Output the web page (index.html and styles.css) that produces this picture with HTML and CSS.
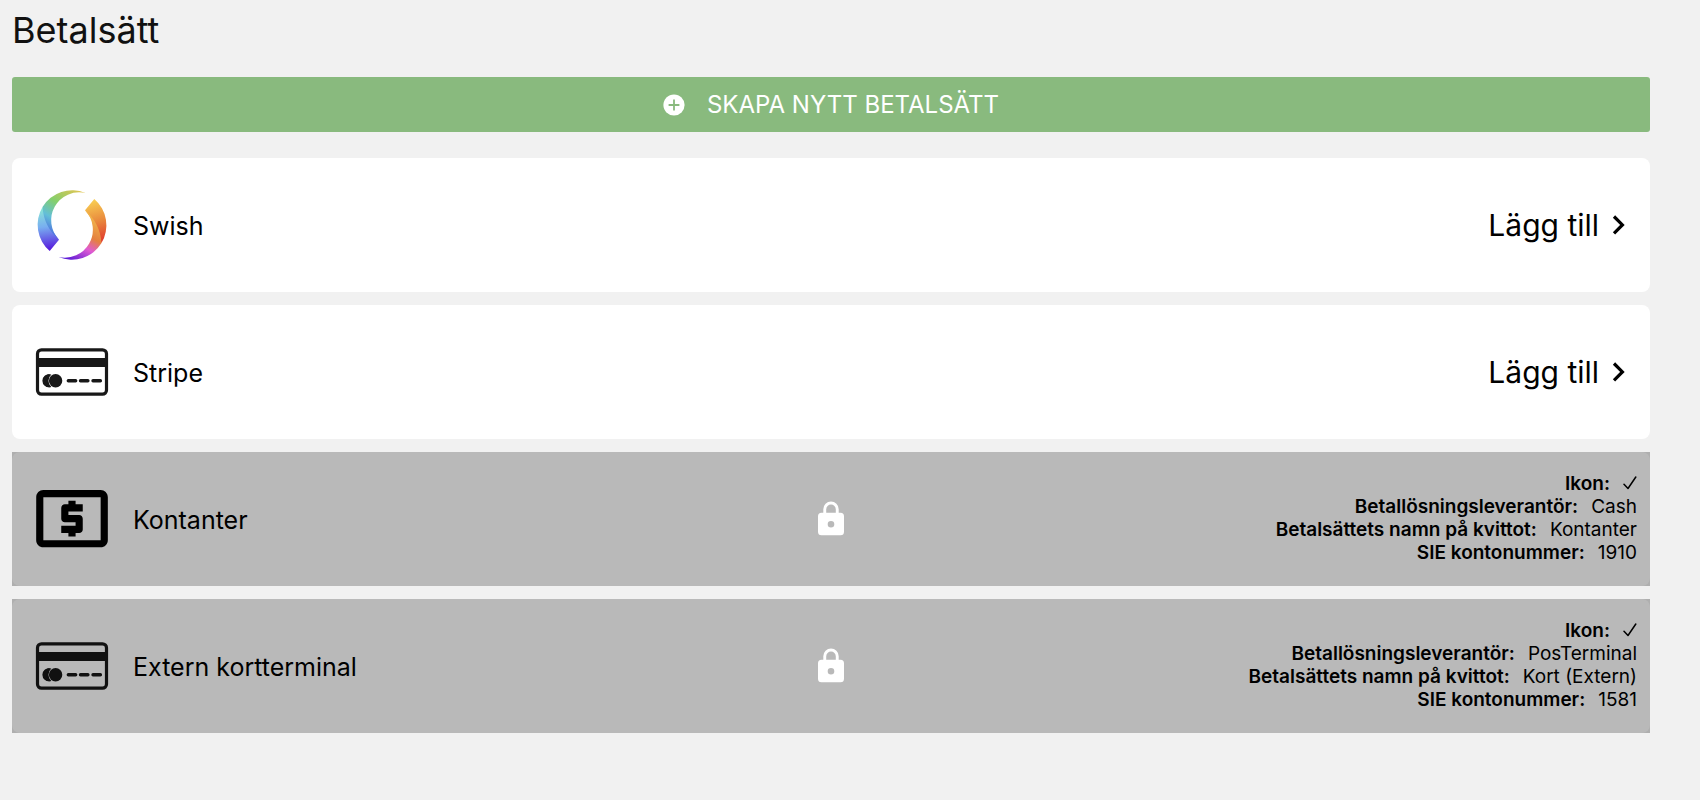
FILE: index.html
```html
<!DOCTYPE html>
<html lang="sv">
  <head>
    <meta charset="UTF-8" />
    <meta name="viewport" content="width=device-width, initial-scale=1.0" />
    <title>Betalsätt</title>
    <link rel="stylesheet" href="styles.css">
  </head>
  <body>
    <!-- icons that are used by more than one row -->
    <svg class="sprite" aria-hidden="true">
      <symbol id="icon-card" viewBox="0 0 96 96">
        <rect x="13.5" y="25.8" width="69" height="44.4" rx="4" fill="none" stroke="#181818" stroke-width="3.2" />
        <rect x="13" y="34" width="70" height="9" fill="#181818" />
        <path d="M26 50.4a6.5 6.5 0 1 0 0 12.8a8.6 8.6 0 0 1 0-12.8z" fill="#181818" />
        <path d="M27.4 50.6A6.5 6.5 0 1 0 27.4 63A8 8 0 0 1 27.4 50.6z" fill="#181818" />
        <circle cx="31.6" cy="56.8" r="6.7" fill="#181818" />
        <path d="M44.3 56.8h7.4M56.5 56.8h7.4M69 56.8h7.4" stroke="#181818" stroke-width="3.4" stroke-linecap="round" />
      </symbol>
      <symbol id="icon-chevron" viewBox="0 0 24 24">
        <path d="M7 3.5l8.4 8.4l-8.4 8.4" fill="none" stroke="currentColor" stroke-width="3.2" />
      </symbol>
      <symbol id="icon-lock" viewBox="0 0 40 40">
        <path fill-rule="evenodd" d="M29.5 13.8h-1.8v-3.6a7.7 7.7 0 0 0-15.4 0v3.6h-1.8a3.5 3.5 0 0 0-3.5 3.5v15.5a3.5 3.5 0 0 0 3.5 3.5h19a3.5 3.5 0 0 0 3.5-3.5V17.3a3.5 3.5 0 0 0-3.5-3.5zM20 28.5a3.3 3.3 0 1 1 0-6.6a3.3 3.3 0 0 1 0 6.6zM24.8 13.8h-9.6v-3.4a4.8 4.8 0 0 1 9.6 0z" fill="#fff" />
      </symbol>
      <symbol id="icon-check" viewBox="0 0 14 14">
        <path d="M1 8.2l4 4.3L12.8 1" fill="none" stroke="currentColor" stroke-width="1.5" stroke-linecap="round" stroke-linejoin="round" />
      </symbol>
    </svg>

    <main class="page">
      <h1 class="title">Betalsätt</h1>

      <button class="create-button" type="button">
        <svg class="create-icon" viewBox="0 0 22 22" aria-hidden="true">
          <circle cx="11" cy="11" r="10.6" fill="#fff" />
          <path d="M11 5.6v10.8M5.6 11h10.8" stroke="#89ba7e" stroke-width="1.8" />
        </svg>
        <span>SKAPA NYTT BETALSÄTT</span>
      </button>

      <ul class="methods">
        <li class="method">
          <svg class="method-icon" viewBox="0 0 96 96" aria-hidden="true">
            <defs>
              <linearGradient id="leftOuter" gradientUnits="userSpaceOnUse" x1="20" y1="26" x2="27" y2="73">
                <stop offset="0" stop-color="#8ff5cf" />
                <stop offset="0.5" stop-color="#78aef0" />
                <stop offset="1" stop-color="#5516dc" />
              </linearGradient>
              <linearGradient id="leftInner" gradientUnits="userSpaceOnUse" x1="60" y1="15" x2="30" y2="62">
                <stop offset="0" stop-color="#e3c552" />
                <stop offset="0.42" stop-color="#83cf6c" />
                <stop offset="0.7" stop-color="#63bfd8" />
                <stop offset="1" stop-color="#4a62e0" />
              </linearGradient>
              <linearGradient id="rightOuter" gradientUnits="userSpaceOnUse" x1="68" y1="24" x2="80" y2="66">
                <stop offset="0" stop-color="#f8cc52" />
                <stop offset="0.5" stop-color="#e8863c" />
                <stop offset="1" stop-color="#e0302c" />
              </linearGradient>
              <linearGradient id="rightInner" gradientUnits="userSpaceOnUse" x1="64" y1="34" x2="38" y2="82">
                <stop offset="0" stop-color="#f2be4c" />
                <stop offset="0.4" stop-color="#e5803f" />
                <stop offset="0.62" stop-color="#e05bd2" />
                <stop offset="1" stop-color="#4a12d8" />
              </linearGradient>
            </defs>
            <path d="M25.7 74A34.6 34.6 0 0 1 18.5 30Q24 50 35 62.7z" fill="url(#leftOuter)" />
            <path d="M61.5 16A34.6 34.6 0 0 0 18.5 30Q20 50 35 62.7A28 28 0 0 1 61.5 16z" fill="url(#leftInner)" />
            <path d="M70.3 22A34.6 34.6 0 0 1 77.5 66Q72 46 61 33.3z" fill="url(#rightOuter)" />
            <path d="M34.5 80A34.6 34.6 0 0 0 77.5 66Q76 46 61 33.3A28 28 0 0 1 34.5 80z" fill="url(#rightInner)" />
          </svg>
          <span class="method-name">Swish</span>
          <button class="add-button" type="button">
            Lägg till
            <svg class="chevron" aria-hidden="true"><use href="#icon-chevron" /></svg>
          </button>
        </li>

        <li class="method">
          <svg class="method-icon" aria-hidden="true"><use href="#icon-card" /></svg>
          <span class="method-name">Stripe</span>
          <button class="add-button" type="button">
            Lägg till
            <svg class="chevron" aria-hidden="true"><use href="#icon-chevron" /></svg>
          </button>
        </li>

        <li class="method">
          <svg class="method-icon" viewBox="-1.4 -1.3 26.8 26.8" aria-hidden="true">
            <path d="M11 17h2v-1h1c.55 0 1-.45 1-1v-3c0-.55-.45-1-1-1h-3v-1h4V8h-2V7h-2v1h-1c-.55 0-1 .45-1 1v3c0 .55.45 1 1 1h3v1H9v2h2v1zm9-13H4c-1.11 0-1.99.89-1.99 2L2 18c0 1.11.89 2 2 2h16c1.11 0 2-.89 2-2V6c0-1.11-.89-2-2-2zm0 14H4V6h16v12z" />
          </svg>
          <span class="method-name">Kontanter</span>
          <dl class="details">
            <div class="detail"><dt>Ikon:</dt><dd><svg class="check" role="img" aria-label="Ja"><use href="#icon-check" /></svg></dd></div>
            <div class="detail"><dt>Betallösningsleverantör:</dt><dd>Cash</dd></div>
            <div class="detail"><dt>Betalsättets namn på kvittot:</dt><dd>Kontanter</dd></div>
            <div class="detail"><dt>SIE kontonummer:</dt><dd>1910</dd></div>
          </dl>
          <div class="locked"><svg class="lock" aria-hidden="true"><use href="#icon-lock" /></svg></div>
        </li>

        <li class="method">
          <svg class="method-icon" aria-hidden="true"><use href="#icon-card" /></svg>
          <span class="method-name">Extern kortterminal</span>
          <dl class="details">
            <div class="detail"><dt>Ikon:</dt><dd><svg class="check" role="img" aria-label="Ja"><use href="#icon-check" /></svg></dd></div>
            <div class="detail"><dt>Betallösningsleverantör:</dt><dd>PosTerminal</dd></div>
            <div class="detail"><dt>Betalsättets namn på kvittot:</dt><dd>Kort (Extern)</dd></div>
            <div class="detail"><dt>SIE kontonummer:</dt><dd>1581</dd></div>
          </dl>
          <div class="locked"><svg class="lock" aria-hidden="true"><use href="#icon-lock" /></svg></div>
        </li>
      </ul>
    </main>
  </body>
</html>
```
FILE: styles.css
```css
* {
  box-sizing: border-box;
}

body {
  margin: 0;
  background: #f1f1f1;
  color: #000;
  font-family: Inter, "Liberation Sans", sans-serif;
}

.sprite {
  display: none;
}

.page {
  padding: 8px 50px 12px 12px;
}

.title {
  margin: 0 0 25px;
  font-size: 36px;
  line-height: 44px;
  font-weight: 400;
  color: #111;
}

.create-button {
  display: flex;
  align-items: center;
  justify-content: center;
  gap: 22px;
  width: 100%;
  height: 55px;
  padding: 0;
  border: none;
  border-radius: 3px;
  background: #89ba7e;
  color: #fff;
  font-family: inherit;
  font-size: 24px;
  cursor: pointer;
}

.create-icon {
  width: 22px;
  height: 22px;
}

.methods {
  display: flex;
  flex-direction: column;
  gap: 13px;
  margin: 26px 0 0;
  padding: 0;
  list-style: none;
}

.method {
  position: relative;
  display: flex;
  align-items: center;
  gap: 13px;
  min-height: 134px;
  padding: 0 13px 0 12px;
  border-radius: 8px;
  background: #fff;
}

.method-icon {
  flex: none;
  width: 96px;
  height: 96px;
}

.method-name {
  padding-top: 2px;
  font-size: 25px;
}

.add-button {
  display: flex;
  align-items: center;
  gap: 8px;
  margin-left: auto;
  padding: 0 6px;
  border: none;
  background: none;
  color: inherit;
  font-family: inherit;
  font-size: 30px;
  cursor: pointer;
}

.chevron {
  width: 24px;
  height: 24px;
}

.details {
  margin: 0 0 0 auto;
  padding-bottom: 2px;
  font-size: 19px;
  line-height: 23px;
}

.detail {
  display: flex;
  justify-content: flex-end;
  gap: 13px;
}

.detail dt {
  font-weight: 600;
}

.detail dd {
  margin: 0;
}

.check {
  width: 14px;
  height: 14px;
}

/* grey sheet over methods that can't be changed */
.locked {
  position: absolute;
  inset: 0;
  display: flex;
  align-items: center;
  justify-content: center;
  background: rgba(0, 0, 0, 0.275);
}

.lock {
  width: 40px;
  height: 40px;
}
```
